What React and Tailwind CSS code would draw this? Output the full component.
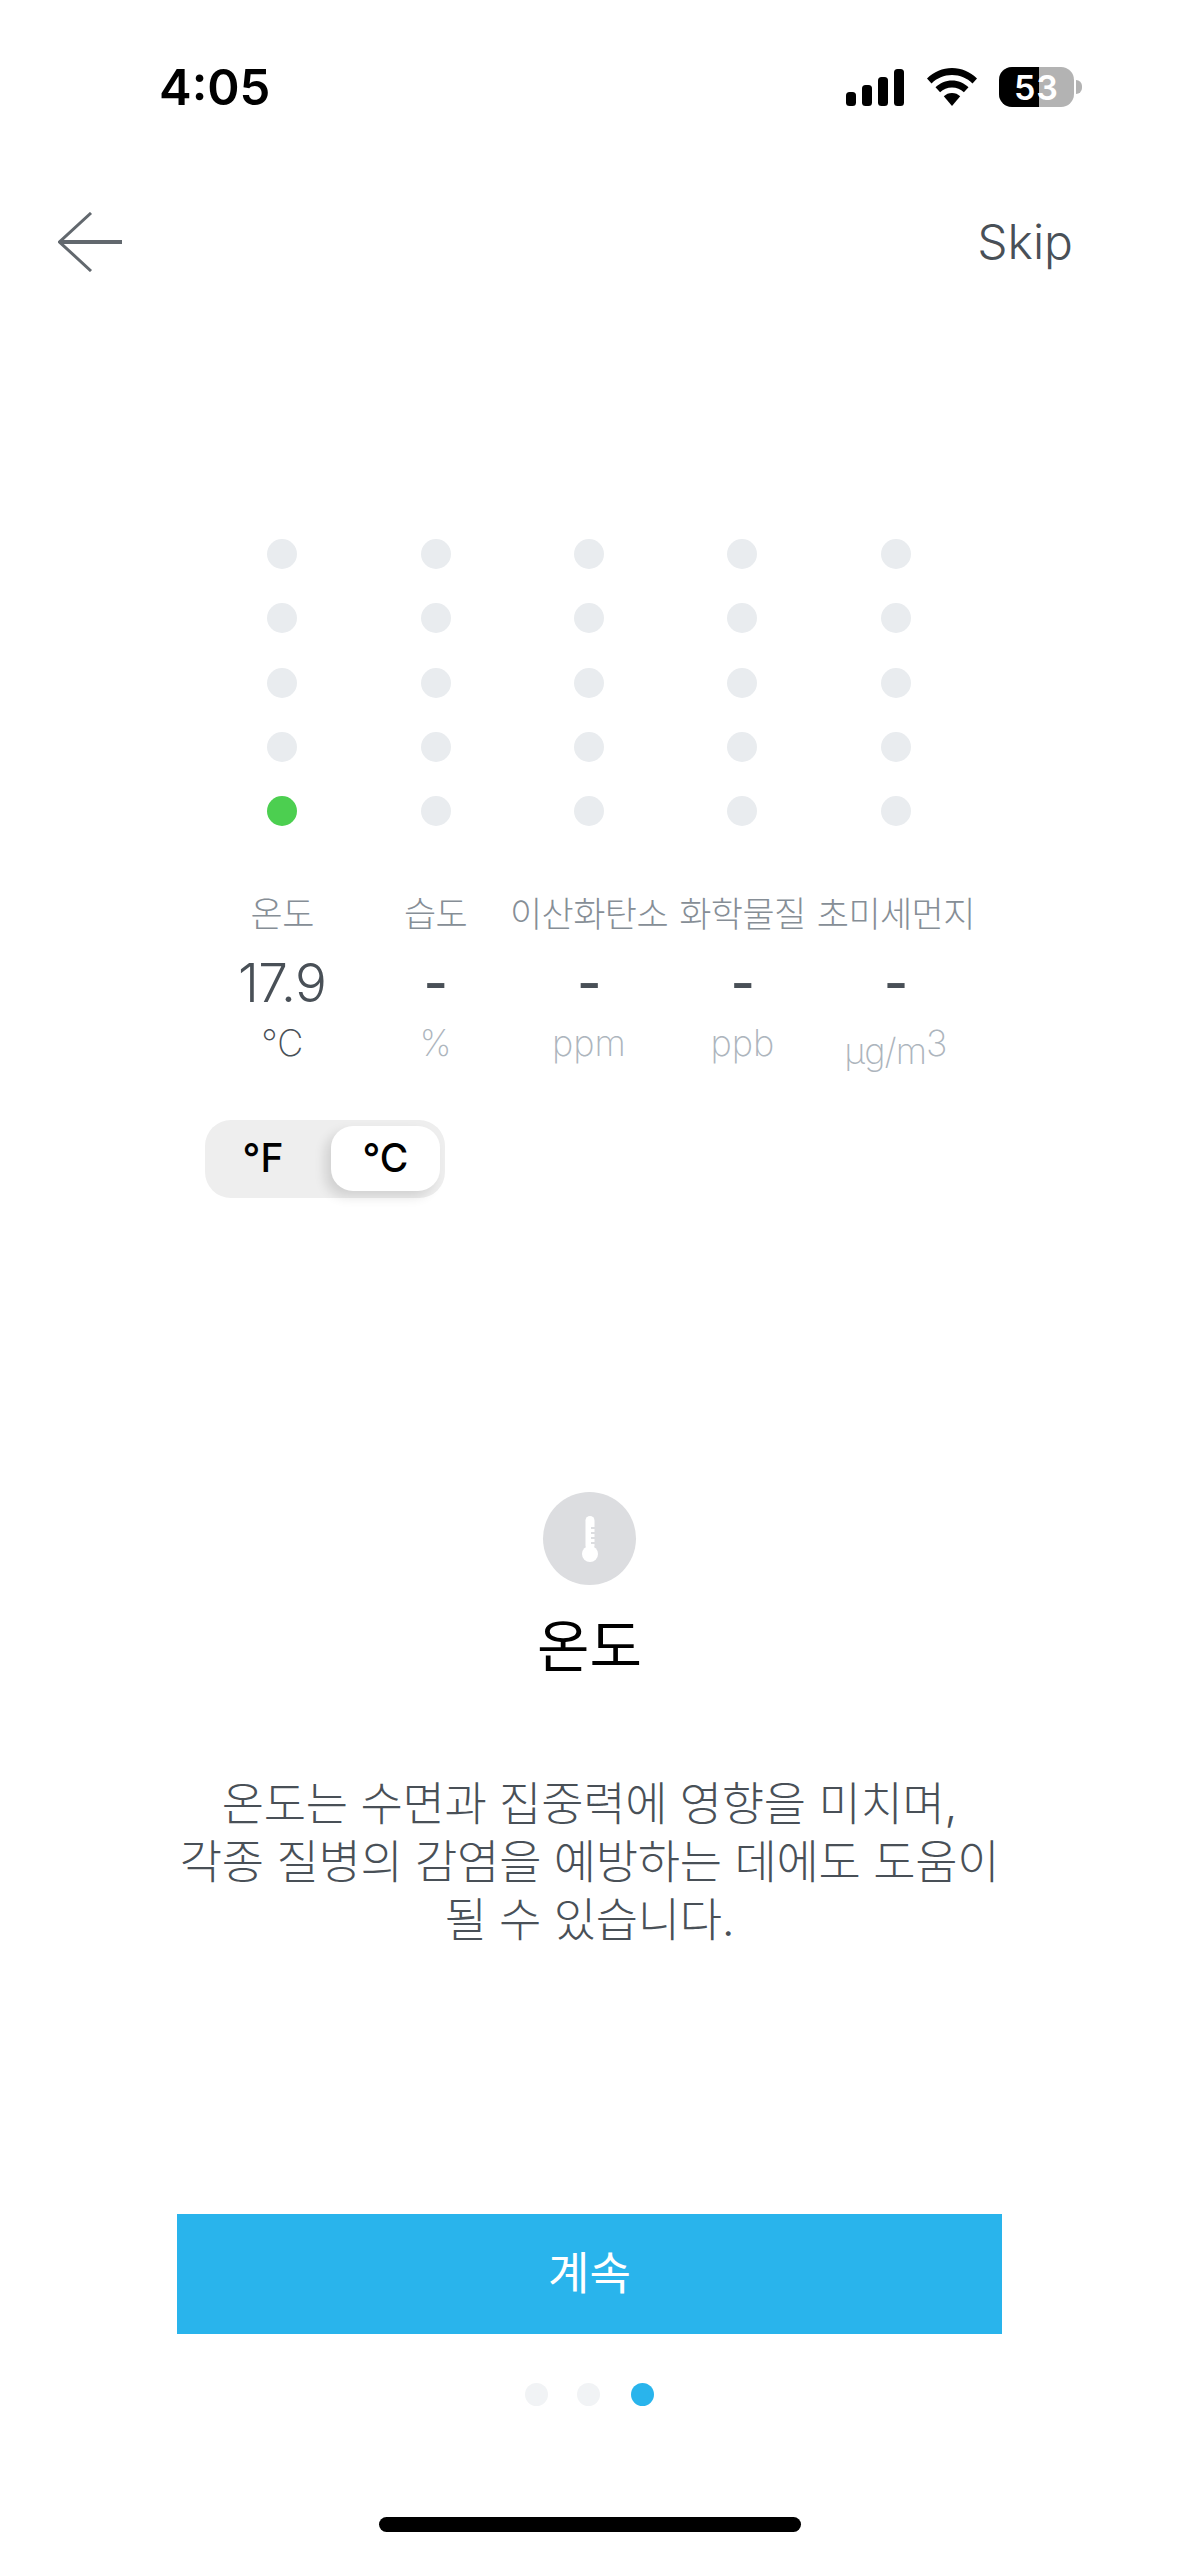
const KR = "font-['Inter','Noto_Sans_CJK_KR',sans-serif]"

const sensors = [
  { label: '온도', value: '17.9', unit: '℃', on: true },
  { label: '습도', value: '-', unit: '%' },
  { label: '이산화탄소', value: '-', unit: 'ppm' },
  { label: '화학물질', value: '-', unit: 'ppb' },
  { label: '초미세먼지', value: '-', unit: 'µg/m', sup: '3' },
]

function StatusBar() {
  return (
    <div className="flex items-center justify-between h-[40px] mt-[67px] pl-[159px] pr-[97px]">
      <span className="font-semibold text-[49px] leading-none text-black">4:05</span>
      <div className="flex items-center">
        <svg width="58" height="37" viewBox="0 0 58 37" fill="#000">
          <rect x="0" y="23" width="10" height="14" rx="3.5" />
          <rect x="16" y="16" width="10" height="21" rx="3.5" />
          <rect x="32" y="8" width="10" height="29" rx="3.5" />
          <rect x="48" y="0" width="10" height="37" rx="3.5" />
        </svg>
        <svg className="ml-[23px]" width="50" height="38" viewBox="0 0 50 38" fill="#000">
          <path d="M25 0C15.5 0 7 3.8 0 10.5l4.5 5C10 10 17 7 25 7s15 3 20.5 8.5l4.5-5C43 3.8 34.500 0 25 0z" />
          <path d="M25 12.500c-6.300 0-12 2.500-16.500 6.800l4.600 5C16.300 21.200 20.400 19.500 25 19.500s8.700 1.700 11.900 4.800l4.600-5C37 15 31.300 12.500 25 12.500z" />
          <path d="M25 25c-3.200 0-6 1.200-8.200 3.300L25 38l8.200-9.700C31 26.200 28.200 25 25 25z" />
        </svg>
        <div className="ml-[22px] relative flex w-[75px] h-[40px] rounded-[13px] overflow-hidden bg-[#b3b3b3]">
          <div className="w-[40px] h-full bg-black" />
          <span className="absolute inset-0 flex items-center justify-center font-semibold text-[34px] tracking-[1px] text-white">53</span>
        </div>
        <div className="ml-[2px] w-[6px] h-[14px] rounded-r-full bg-[#b3b3b3]" />
      </div>
    </div>
  )
}

function SensorColumn({ s }) {
  return (
    <div className="flex flex-col items-center">
      <div className="flex flex-col gap-[34.25px]">
        {[0, 1, 2, 3, 4].map(i => (
          <div key={i} className={`w-[30px] h-[30px] rounded-full ${s.on && i === 4 ? 'bg-[#4ccf50]' : 'bg-[#e9ecef]'}`} />
        ))}
      </div>
      <div className="mt-[68px] h-[40px] leading-[40px] text-[35px] font-light whitespace-nowrap text-[#868e96] tracking-[-0.6px]">{s.label}</div>
      <div className={`mt-[27px] h-[44px] leading-[44px] text-[53px] tracking-[-0.5px] text-[#495057] ${s.on ? 'font-light' : 'font-medium'}`}>{s.value}</div>
      <div className={`mt-[18px] h-[40px] leading-[40px] text-[36px] font-extralight whitespace-nowrap ${s.on ? 'text-[#495057]' : 'text-[#adb5bd]'}`}>
        {s.sup ? <span className="align-[-8px] tracking-[-1px]">{s.unit}</span> : s.unit}
        {s.sup}
      </div>
    </div>
  )
}

export default function App() {
  return (
    <div className={`w-[1179px] h-[2556px] bg-white flex flex-col overflow-hidden ${KR}`}>
      <StatusBar />

      {/* nav */}
      <div className="flex items-center justify-between h-[60px] mt-[105px] pl-[58px] pr-[106px]">
        <svg width="64" height="60" viewBox="0 0 64 60" fill="none" stroke="#62686e" strokeWidth="3">
          <path d="M33 1 1.500 30 33 59" />
          <path d="M1.500 30H64" strokeWidth="4" />
        </svg>
        <span className="text-[48px] leading-none font-light text-[#495057]">Skip</span>
      </div>

      {/* sensors */}
      <div className="grid grid-cols-5 w-[767px] ml-[205.500px] mt-[267px]">
        {sensors.map(s => <SensorColumn key={s.label} s={s} />)}
      </div>

      {/* unit toggle */}
      <div className="flex w-[240px] h-[78px] ml-[205px] mt-[57px] pt-[6px] pb-[7px] rounded-[26px] bg-[#eeeeee] items-stretch">
        <div className="w-[116px] flex items-center justify-center text-[39px] font-medium text-black">°F</div>
        <div className="w-[109px] ml-[10px] rounded-[22px] bg-white shadow-[-6px_6px_12px_rgba(0,0,0,0.12)] flex items-center justify-center text-[39px] font-medium text-black">°C</div>
      </div>

      {/* description */}
      <div className="flex flex-col items-center mt-[294px]">
        <div className="w-[93px] h-[93px] rounded-full bg-[#dcdde0] flex items-center justify-center">
          <svg width="16" height="46" viewBox="0 0 16 46" fill="#fff">
            <rect x="3.500" y="0" width="9" height="34" rx="4.500" />
            <circle cx="8" cy="38" r="8" />
            <g fill="#dcdde0">
              <rect x="9" y="11" width="4" height="2" />
              <rect x="9" y="16" width="4" height="2" />
              <rect x="9" y="21" width="4" height="2" />
              <rect x="9" y="26" width="4" height="2" />
            </g>
          </svg>
        </div>
        <h1 className="mt-[30px] text-[57px] leading-[64px] font-normal text-black">온도</h1>
        <p className="mt-[95px] w-[900px] text-center text-[46px] leading-[58px] font-light text-[#495057] tracking-[-0.3px]">
          온도는 수면과 집중력에 영향을 미치며,<br />
          각종 질병의 감염을 예방하는 데에도 도움이<br />
          될 수 있습니다.
        </p>
      </div>

      {/* continue */}
      <div className="mt-auto flex flex-col items-center">
        <button className="w-[825px] h-[120px] bg-[#29b4ec] text-white text-[45px] font-normal">계속</button>
        <div className="flex items-center mt-[49px]">
          <div className="w-[23px] h-[23px] rounded-full bg-[#f1f3f5]" />
          <div className="w-[23px] h-[23px] rounded-full bg-[#f1f3f5] ml-[29px]" />
          <div className="w-[23px] h-[23px] rounded-full bg-[#29b4ec] ml-[31px]" />
        </div>
        <div className="w-[422px] h-[15px] rounded-full bg-black mt-[111px] mb-[24px]" />
      </div>
    </div>
  )
}
